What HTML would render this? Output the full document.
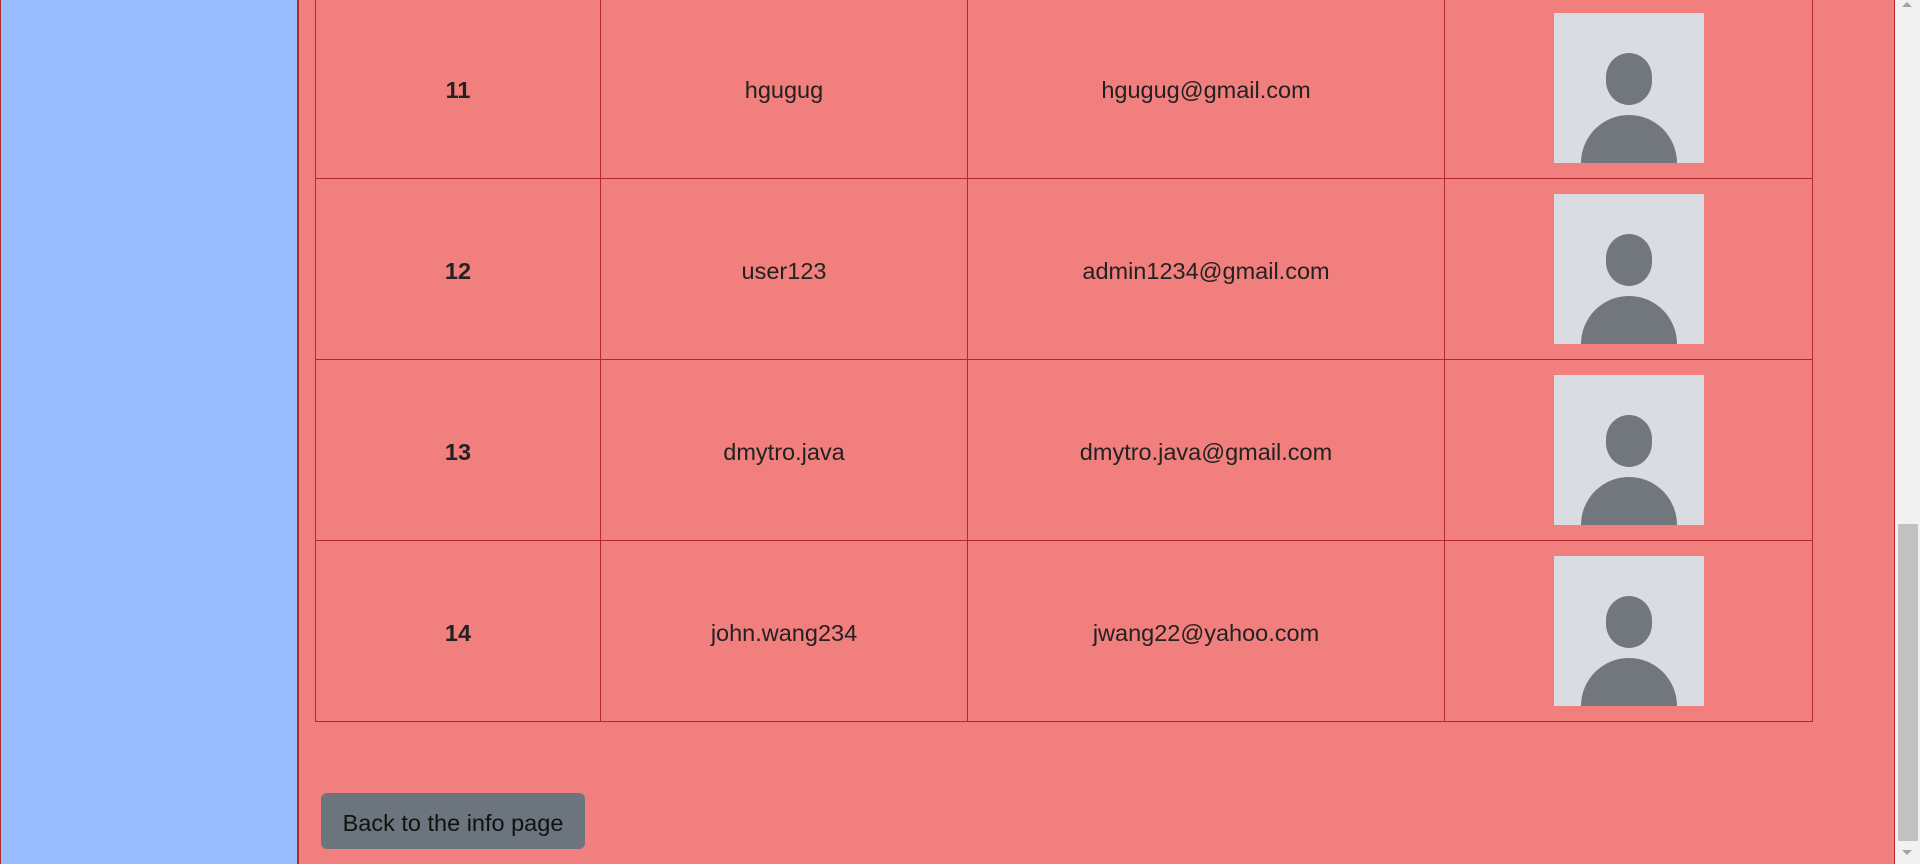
<!DOCTYPE html>
<html><head><style>
html,body{margin:0;padding:0;width:1920px;height:866px;overflow:hidden;background:#fff;font-family:"Liberation Sans",sans-serif}
.side{position:absolute;left:0;top:0;width:299px;height:864px;background:#99bdff;border-left:1px solid #b0282e;border-right:2px solid #b0282e;box-sizing:border-box}
.main{position:absolute;left:299px;top:0;width:1596px;height:864px;background:#f07f7d;border-right:1px solid #b0282e;box-sizing:border-box}
table{position:absolute;left:315px;top:-3px;border-collapse:collapse}
td{border:1px solid #b0282e;height:180px;box-sizing:border-box;padding:4px 0 0 0;text-align:center;font-size:23.5px;color:#222;vertical-align:middle}
td.n{font-weight:bold}
td.i{padding:0}
.sb{position:absolute;left:1895px;top:0;width:25px;height:864px;background:#f1f1f1}
.th{position:absolute;left:1898px;top:524px;width:20px;height:317px;background:#c1c1c1}
.btn{position:absolute;left:321px;top:793px;width:264px;height:56px;background:#6c757d;border-radius:6px;font-size:23.5px;line-height:60px;text-align:center;color:#111}
</style></head><body>
<div class="side"></div>
<div class="main"></div>
<table>
<tr style="height:181px"><td class="n" style="width:285px">11</td><td style="width:367px">hgugug</td><td style="width:477px">hgugug@gmail.com</td><td class="i" style="width:368px"><svg width="150" height="150" viewBox="0 0 150 150" style="display:block;margin:auto"><rect width="150" height="150" fill="#d9dce0"/><rect x="52" y="40" width="46" height="52" rx="23" ry="24" fill="#72777d"/><ellipse cx="75" cy="150" rx="48" ry="48" fill="#72777d"/></svg></td></tr>
<tr style="height:181px"><td class="n">12</td><td>user123</td><td>admin1234@gmail.com</td><td class="i"><svg width="150" height="150" viewBox="0 0 150 150" style="display:block;margin:auto"><rect width="150" height="150" fill="#d9dce0"/><rect x="52" y="40" width="46" height="52" rx="23" ry="24" fill="#72777d"/><ellipse cx="75" cy="150" rx="48" ry="48" fill="#72777d"/></svg></td></tr>
<tr style="height:181px"><td class="n">13</td><td>dmytro.java</td><td>dmytro.java@gmail.com</td><td class="i"><svg width="150" height="150" viewBox="0 0 150 150" style="display:block;margin:auto"><rect width="150" height="150" fill="#d9dce0"/><rect x="52" y="40" width="46" height="52" rx="23" ry="24" fill="#72777d"/><ellipse cx="75" cy="150" rx="48" ry="48" fill="#72777d"/></svg></td></tr>
<tr style="height:181px"><td class="n">14</td><td>john.wang234</td><td>jwang22@yahoo.com</td><td class="i"><svg width="150" height="150" viewBox="0 0 150 150" style="display:block;margin:auto"><rect width="150" height="150" fill="#d9dce0"/><rect x="52" y="40" width="46" height="52" rx="23" ry="24" fill="#72777d"/><ellipse cx="75" cy="150" rx="48" ry="48" fill="#72777d"/></svg></td></tr>
</table>
<div class="btn">Back to the info page</div>
<div class="sb"></div><div class="th"></div>
<div style="position:absolute;left:1902px;top:2px;width:0;height:0;border-left:5px solid transparent;border-right:5px solid transparent;border-bottom:5px solid #a3a3a3"></div>
<div style="position:absolute;left:1902px;top:850px;width:0;height:0;border-left:5px solid transparent;border-right:5px solid transparent;border-top:5px solid #a3a3a3"></div>
</body></html>
